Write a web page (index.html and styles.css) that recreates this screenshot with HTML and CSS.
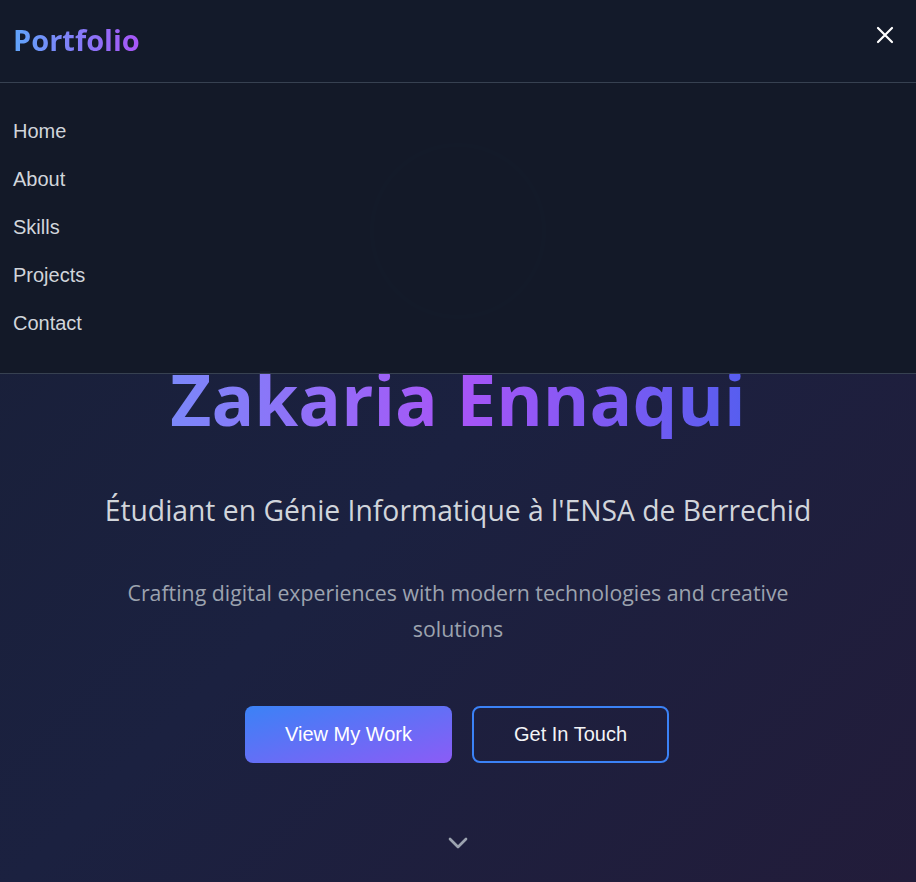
FILE: index.html
```html
<!DOCTYPE html>
<html lang="fr">
<head>
<meta charset="utf-8">
<title>Portfolio</title>
<link rel="stylesheet" href="styles.css">
</head>
<body>
<header class="topbar">
  <a class="logo" href="#">Portfolio</a>
  <button class="close" aria-label="Close menu">
    <svg width="24" height="24" viewBox="0 0 24 24" fill="none" stroke="#fff" stroke-width="2.2" stroke-linecap="round"><path d="M5 5l14 14M19 5L5 19"/></svg>
  </button>
</header>
<nav class="menu">
  <a href="#">Home</a>
  <a href="#">About</a>
  <a href="#">Skills</a>
  <a href="#">Projects</a>
  <a href="#">Contact</a>
</nav>
<main class="hero">
  <div class="avatar"><span>ZE</span></div>
  <h1 class="name">Zakaria Ennaqui</h1>
  <h2 class="subtitle">Étudiant en Génie Informatique à l'ENSA de Berrechid</h2>
  <p class="lead">Crafting digital experiences with modern technologies and creative solutions</p>
  <div class="actions">
    <a class="btn btn-primary" href="#">View My Work</a>
    <a class="btn btn-outline" href="#">Get In Touch</a>
  </div>
  <div class="scroll">
    <svg width="32" height="32" viewBox="0 0 24 24" fill="none" stroke="#9ca3af" stroke-width="2" stroke-linecap="round" stroke-linejoin="round"><path d="M6 9l6 6 6-6"/></svg>
  </div>
</main>
</body>
</html>
```
FILE: styles.css
```css
html, body {
  margin: 0;
  padding: 0;
}
body {
  width: 916px;
  height: 882px;
  overflow: hidden;
  position: relative;
  background: linear-gradient(135deg, #181f36 0%, #1b2140 50%, #221c3a 100%);
  font-family: "Liberation Sans", Arial, sans-serif;
}
.topbar {
  position: absolute;
  top: 0;
  left: 0;
  right: 0;
  height: 83px;
  box-sizing: border-box;
  border-bottom: 1px solid #374151;
  background: #131a2a;
  display: flex;
  align-items: center;
  justify-content: space-between;
  padding: 0 13px;
  z-index: 3;
}
.logo {
  font-family: "Open Sans", "Noto Sans", sans-serif;
  font-weight: 700;
  font-size: 29px;
  text-decoration: none;
  background: linear-gradient(90deg, #60a5fa, #a855f7);
  -webkit-background-clip: text;
  background-clip: text;
  color: transparent;
  margin-top: -4px;
}
.close {
  background: none;
  border: 0;
  padding: 0;
  width: 24px;
  height: 24px;
  margin-right: 6px;
  margin-top: -12px;
}
.menu {
  position: absolute;
  top: 83px;
  left: 0;
  right: 0;
  height: 291px;
  box-sizing: border-box;
  border-bottom: 1px solid #374151;
  background: rgba(19, 25, 40, 0.96);
  display: flex;
  flex-direction: column;
  padding: 24px 13px 0;
  z-index: 2;
}
.menu a {
  color: #d1d5db;
  text-decoration: none;
  font-size: 20px;
  line-height: 48px;
}
.hero {
  display: flex;
  flex-direction: column;
  align-items: center;
  padding-top: 143px;
  font-family: "Open Sans", "Noto Sans", sans-serif;
  text-align: center;
}
.avatar {
  width: 176px;
  height: 176px;
  border-radius: 50%;
  box-sizing: border-box;
  border: 4px solid #2e3556;
  background: #1d2338;
  display: flex;
  align-items: center;
  justify-content: center;
}
.avatar span {
  font-size: 56px;
  font-weight: 700;
  color: #252b45;
}
.name {
  margin: 40px 0 0;
  font-size: 71px;
  line-height: 80px;
  font-weight: 700;
  width: 916px;
  background: linear-gradient(90deg, #60a5fa 0%, #a855f7 50%, #2563eb 100%);
  -webkit-background-clip: text;
  background-clip: text;
  color: transparent;
}
.subtitle {
  margin: 51px 0 0;
  font-size: 28.3px;
  line-height: 40px;
  font-weight: 400;
  color: #d1d5db;
}
.lead {
  margin: 45px 0 0;
  max-width: 680px;
  font-size: 21.3px;
  line-height: 36px;
  color: #9ca3af;
}
.actions {
  display: flex;
  gap: 20px;
  margin-top: 59px;
  margin-left: -2px;
}
.btn {
  font-family: "Liberation Sans", Arial, sans-serif;
  font-size: 20px;
  line-height: 25px;
  color: #fff;
  text-decoration: none;
  border-radius: 8px;
  box-sizing: border-box;
  height: 57px;
  display: flex;
  align-items: center;
  justify-content: center;
}
.btn-primary {
  width: 207px;
  background: linear-gradient(to bottom right, #3b82f6, #8b5cf6);
}
.btn-outline {
  width: 197px;
  border: 2px solid #3b82f6;
  color: #f3f4f6;
}
.scroll {
  margin-top: 64px;
  height: 32px;
}
```
